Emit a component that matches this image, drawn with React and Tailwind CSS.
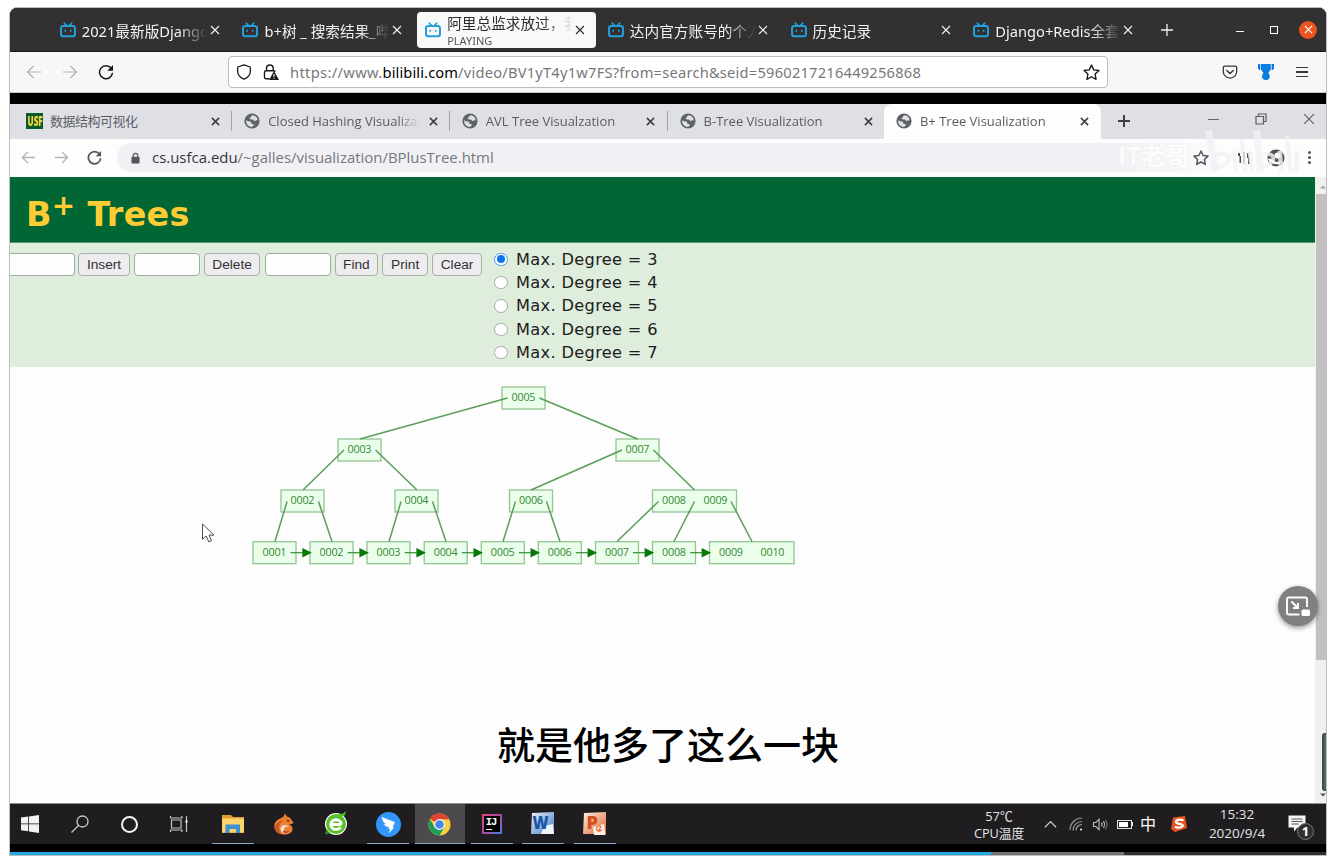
import React from "react";

const Bili = () => (
  <svg viewBox="0 0 16 16" className="h-4 w-4 shrink-0" fill="none" stroke="#23a0dc">
    <rect x="1" y="4.1" width="14" height="10.2" rx="2.4" strokeWidth="2" />
    <path d="M4.4 1.2 6.6 3.6M11.6 1.2 9.4 3.6" strokeWidth="1.7" strokeLinecap="round" />
    <path d="M5.3 7.8v2M10.7 7.8v2" strokeWidth="1.5" />
  </svg>
);

const Cross = ({ className, width = 1.2 }) => (
  <svg viewBox="0 0 10 10" className={className} fill="none" stroke="currentColor" strokeWidth={width}>
    <path d="M1 1l8 8M9 1l-8 8" />
  </svg>
);

const Globe = () => (
  <svg viewBox="0 0 16 16" className="h-4 w-4 shrink-0">
    <circle cx="8" cy="8" r="7.6" fill="#5f6368" />
    <path d="M2.2 7.2c1.6.9 2.6 1.3 3.9 1.2 1 0 1.2.9 1 1.7-.2.7.8.9 1.7.8 1.200-.1 1.300 1.100.5 1.900-.6.6-1 1.200-2 1.200A6.100 6.100 0 0 1 2.200 7.200zM8.700 2.300c-.9.6-1.900.8-1.800 1.700.1.8-1.500.9-1.300 1.800.3 1 2 .4 3.100.7.9.3.9 1.400 2 1.500.9.1 1.100-.8 3-.7a5.900 5.900 0 0 0-5-5z" fill="#dfe0e6" />
  </svg>
);

const Arrow = ({ className, flip, stroke = 1.2 }) => (
  <svg viewBox="0 0 16 16" className={className} fill="none" stroke="currentColor" strokeWidth={stroke}>
    {flip ? <path d="M1 8h13.500M8.500 2l6 6-6 6" /> : <path d="M15 8H1.500M7.500 2l-6 6 6 6" />}
  </svg>
);

const Reload = ({ className, stroke = 1.5 }) => (
  <svg viewBox="0 0 16 16" className={className} fill="none" stroke="currentColor" strokeWidth={stroke}>
    <path d="M13.200 4.300A6.500 6.500 0 1 0 14.500 8.800" />
    <path d="M15 1v5.700H9.300z" fill="currentColor" stroke="none" />
  </svg>
);

const Star = ({ className, stroke }) => (
  <svg viewBox="0 0 16 16" className={className} fill="none" stroke="currentColor" strokeWidth={stroke} strokeLinejoin="round">
    <path d="M8 1l2.100 4.500 4.900.6-3.600 3.400.9 4.900L8 12l-4.300 2.400.9-4.900L1 6.100l4.900-.6z" />
  </svg>
);

const firefoxTabs = [
  { title: "2021最新版Django全" },
  { title: "b+树 _ 搜索结果_哔" },
  { title: "阿里总监求放过，我", active: true },
  { title: "达内官方账号的个人" },
  { title: "历史记录" },
  { title: "Django+Redis全套视" },
];

function FirefoxTab({ title, active }) {
  return (
    <div className="flex w-[182.700px] shrink-0 items-center pr-[3.700px]">
      <div className={active ? "flex h-9 w-full items-center rounded bg-[#f9f9fa] pl-2 text-[#2c2c30]" : "flex h-9 w-full items-center pl-2 text-[#f2f2f2]"}>
        <Bili />
        <div className="ml-[6px] w-[127px] overflow-hidden whitespace-nowrap [mask-image:linear-gradient(to_right,black_96px,transparent_126px)]">
          {active ? (
            <>
              <div className="text-[14.670px] leading-[21px]">{title}</div>
              <div className="text-[11px] leading-[13px] text-[#55555a]">PLAYING</div>
            </>
          ) : (
            <div className="pt-[3px] text-[14.670px] leading-[22px]">{title}</div>
          )}
        </div>
        <Cross className="ml-[1px] h-[10px] w-[10px] shrink-0" width={1.1} />
      </div>
    </div>
  );
}

function FirefoxBars() {
  return (
    <div className="shrink-0 font-['Noto_Sans','Noto_Sans_CJK_SC',sans-serif]">
      <div className="flex h-11 items-center rounded-t-[7px] border-b border-[#1c1b1b] bg-[#323030] pl-[41.800px] text-[#f2f2f2]">
        {firefoxTabs.map((t) => <FirefoxTab key={t.title} {...t} />)}
        <svg viewBox="0 0 12 12" className="ml-[13.200px] h-3 w-3" stroke="currentColor" strokeWidth="1.300"><path d="M6 0v12M0 6h12" /></svg>
        <div className="ml-[63px] mt-1 h-px w-2 bg-white" />
        <div className="ml-[26px] h-2 w-2 border border-white" />
        <div className="ml-[21px] flex h-[18px] w-[18px] items-center justify-center rounded-full bg-[#e95420]">
          <Cross className="h-[9px] w-[9px] text-white" width={1.300} />
        </div>
      </div>
      <div className="flex h-[41px] items-center border-b border-[#c9c9c9] bg-[#f7f7f8] text-[#18181a]">
        <Arrow className="ml-4 h-4 w-4 text-[#b2b2b4]" />
        <Arrow flip className="ml-5 h-4 w-4 text-[#b2b2b4]" />
        <Reload className="ml-5 h-4 w-4" />
        <div className="ml-[114px] flex h-8 w-[880px] items-center rounded border border-[#bdbdbd] bg-white pl-[7px] pr-[7px]">
          <svg viewBox="0 0 16 16" className="h-4 w-4" fill="none" stroke="currentColor" strokeWidth="1.300"><path d="M8 .9 14.300 3v4.500c0 3.500-2.500 6-6.300 7.700-3.800-1.700-6.300-4.200-6.300-7.700V3z" strokeLinejoin="round" /></svg>
          <svg viewBox="0 0 16 16" className="ml-[11px] h-4 w-4"><path d="M6.500 14.700H3.200a1.700 1.700 0 0 1-1.700-1.700V8.300c0-.9.700-1.600 1.700-1.600h7.500c.8 0 1.300.4 1.500 1M3.500 6.500V4.300a3.300 3.300 0 0 1 6.700 0v2.200" fill="none" stroke="currentColor" strokeWidth="1.400" /><path d="M11 7l5 9H6.100z" fill="currentColor" /><path d="M11 10v3M11 13.800v1" stroke="white" strokeWidth="1.100" /></svg>
          <div className="ml-[11px] whitespace-nowrap text-[14.670px] leading-none text-[#77777b]">
            <span className="tracking-[0.350px]">https://www.</span><span className="tracking-[0.100px] text-black">bilibili.com</span><span className="tracking-[0.225px]">/video/BV1yT4y1w7FS?from=search&amp;seid=5960217216449256868</span>
          </div>
          <Star className="ml-auto h-[17px] w-[17px]" stroke={1.300} />
        </div>
        <svg viewBox="0 0 16 16" className="ml-[114px] h-4 w-4" fill="none" stroke="#38383d" strokeWidth="1.300"><path d="M2.700 2.200h10.600c.8 0 1.400.5 1.400 1.400v3.800c0 3.700-2.900 6.700-6.700 6.700S1.300 11.100 1.300 7.400V3.600c0-.9.6-1.400 1.400-1.400z" /><path d="M4.800 6.500 8 9.500l3.200-3" strokeWidth="1.500" strokeLinecap="round" /></svg>
        <svg viewBox="0 0 16 16" className="ml-5 h-4 w-4" fill="#0a7be0"><path d="M0 0h2.200v6H1.300L0 4.800zM2.900 0h9.900v6.300h-1.300v1.500l-1.300 1v1.300H5.500V8.800L4.200 7.800V6.300H2.900zM13.600 0H16v4.800L14.600 6h-1z" /><circle cx="7.900" cy="12.200" r="3.800" /></svg>
        <div className="ml-[22px] flex w-3 flex-col gap-[3px]"><i className="h-[1.500px] bg-[#38383d]" /><i className="h-[1.500px] bg-[#38383d]" /><i className="h-[1.500px] bg-[#38383d]" /></div>
      </div>
    </div>
  );
}

function ChromeTab({ title, usf, active, last }) {
  return (
    <div className={active ? "ml-[-1.600px] flex h-full w-[217px] shrink-0 items-center rounded-t-lg bg-[#fdfdfe] pl-[12px]" : "flex h-full w-[217.700px] shrink-0 items-center pl-[11.700px]"}>
      {usf ? (
        <div className="flex h-4 w-[17px] shrink-0 items-center justify-center bg-[#0c5a2b] text-[14px] font-extrabold leading-none text-[#f2d43c]"><span className="inline-block scale-x-[0.580]">USF</span></div>
      ) : <Globe />}
      <div className={usf ? "ml-[6.500px] w-[152.500px] shrink-0 overflow-hidden whitespace-nowrap text-[13px] leading-5 tracking-[-0.500px] text-[#5a5c62]" : "ml-2 w-[152px] shrink-0 overflow-hidden whitespace-nowrap text-[13px] leading-5 text-[#5a5c62] [mask-image:linear-gradient(to_right,black_130px,transparent_152px)]"}>
        {title}
      </div>
      <Cross className={active ? "ml-[7.700px] h-[9px] w-[9px] shrink-0 text-[#3f4046]" : "ml-[8.400px] h-[9px] w-[9px] shrink-0 text-[#3f4046]"} width={1.800} />
      {!active && !last && <div className="ml-[11.600px] h-5 w-px shrink-0 bg-[#a4a5aa]" />}
    </div>
  );
}

function ChromeBars() {
  return (
    <div className="shrink-0 bg-[#fdfdfe] font-['Open_Sans','Noto_Sans_CJK_SC',sans-serif]">
      <div className="flex h-[34.500px] items-center bg-[#dfe0e6] pl-[4.800px] text-[#3f4046]">
        <ChromeTab usf title="数据结构可视化" />
        <ChromeTab title="Closed Hashing Visualizat" />
        <ChromeTab title="AVL Tree Visualzation" />
        <ChromeTab title="B-Tree Visualization" last />
        <ChromeTab title="B+ Tree Visualization" active />
        <svg viewBox="0 0 12 12" className="ml-[17px] h-3 w-3" stroke="currentColor" strokeWidth="2"><path d="M6 0v12M0 6h12" /></svg>
        <div className="mb-1 ml-[78px] h-px w-[11px] bg-[#66676c]" />
        <svg viewBox="0 0 12 12" className="mb-1 ml-[36px] h-3 w-3" fill="none" stroke="#5c5d62" strokeWidth="1.200"><path d="M1 3.500h7.500V11H1zM3.500 3.500V1H11v7.500H8.500" /></svg>
        <Cross className="mb-1 ml-[36px] h-3 w-3 text-[#5c5d62]" width={0.900} />
      </div>
      <div className="flex h-[38.500px] items-center text-[#55565b]">
        <Arrow className="ml-[11px] h-[15px] w-[15px] text-[#b4b4b8]" stroke={1.500} />
        <Arrow flip className="ml-[18px] h-[15px] w-[15px] text-[#b4b4b8]" stroke={1.500} />
        <Reload className="ml-[18px] h-[15px] w-[15px]" stroke={1.900} />
        <div className="ml-[15px] flex h-[29px] w-[1106px] items-center rounded-full bg-gradient-to-r from-[#f1f0f4] from-90% to-[#fbfbfd] pl-[14px]">
          <svg viewBox="0 0 10 12" className="h-3 w-[9px]"><rect y="4.500" x=".5" width="9" height="7.500" rx="1" fill="#55565b" /><path d="M2.500 5V3.300a2.500 2.500 0 0 1 5 0V5" fill="none" stroke="#55565b" strokeWidth="1.300" /></svg>
          <div className="ml-[12px] whitespace-nowrap text-[14.950px] leading-none text-[#77787d]"><span className="text-[#35363b]">cs.usfca.edu</span>/~galles/visualization/BPlusTree.html</div>
          <div className="relative ml-auto mr-[14px]">
            <Star className="relative z-10 h-4 w-4 text-[#55565b]" stroke={1.500} />
            <Watermark />
          </div>
        </div>
        <svg viewBox="0 0 14 14" className="ml-[14px] h-[14px] w-[14px]" fill="#4b4c51"><path d="M1 2h2v3h1v7H2.500V5H1zM6 1h2v11l-2 1zM10 2h2v4h1v7h-2V7h-1z" /></svg>
        <svg viewBox="0 0 18 18" className="ml-[16px] h-[18px] w-[18px]"><circle cx="9" cy="9" r="8.500" fill="#4e4f54" /><circle cx="10.500" cy="6.500" r="3" fill="#fff" /><path d="M1 10c3-1.500 5 1.500 7 2.500s5 0 6.500-1c-1 3.500-4 4.500-7 3.500S2 13.500 1 10z" fill="#fff" /></svg>
        <div className="ml-[23px] flex flex-col gap-[2px]"><i className="h-[3px] w-[3px] rounded-full bg-[#55565b]" /><i className="h-[3px] w-[3px] rounded-full bg-[#55565b]" /><i className="h-[3px] w-[3px] rounded-full bg-[#55565b]" /></div>
      </div>
    </div>
  );
}

function Watermark() {
  return (
    <div className="pointer-events-none absolute left-[-75px] top-[-21px] flex w-[200px] items-end text-white">
      <span className="whitespace-nowrap text-[25px] font-bold leading-[36px] opacity-80 [text-shadow:0_0_1px_#d8d8dc]">IT老哥</span>
      <svg viewBox="0 0 100 44" className="ml-[11px] h-[44px] w-[100px] shrink-0 opacity-80" fill="none" stroke="#f2f2f5" strokeLinecap="square">
        <g strokeWidth="7"><path d="M7 5l6 34M55 5l3 34" /></g>
        <path d="M14 26c8-3 15 0 13 5-2 4-7 7-14 8M59 26c7-3 14 0 12 5-2 4-7 7-12 8" strokeWidth="4" />
        <g strokeWidth="4.500"><path d="M32 24l2 16M40 12l3 28M48 24l2 16M78 24l1 16M85 9l3 31M95 24l-1 16" /></g>
      </svg>
    </div>
  );
}

const Btn = ({ children, className }) => (
  <div className={className}>{children}</div>
);

const Field = ({ className }) => <div className={className} />;

const nodes = [
  [502, 387, 43, ["0005"]],
  [338, 439, 43, ["0003"]],
  [616, 439, 43, ["0007"]],
  [281, 490, 43, ["0002"]],
  [395, 490, 43, ["0004"]],
  [509.500, 490, 43, ["0006"]],
  [652.500, 490, 84, ["0008", "0009"]],
  [253, 541.700, 43, ["0001"]],
  [310, 541.700, 43, ["0002"]],
  [367, 541.700, 43, ["0003"]],
  [424.200, 541.700, 43, ["0004"]],
  [481.300, 541.700, 43, ["0005"]],
  [538.300, 541.700, 43, ["0006"]],
  [595.500, 541.700, 43, ["0007"]],
  [652.500, 541.700, 43, ["0008"]],
  [709.500, 541.700, 84.500, ["0009", "0010"]],
];

const edges = [
  [507.500, 398, 360, 439], [539.500, 398, 637.500, 439],
  [344, 450, 303, 490], [375.500, 450, 417, 490],
  [622, 450, 531, 490], [653.500, 450, 694.500, 490],
  [287, 501.500, 275, 541.500], [318.500, 501.500, 332, 541.500],
  [401, 501.500, 389, 541.500], [432.500, 501.500, 446, 541.500],
  [515.500, 501.500, 503, 541.500], [546.500, 501.500, 560, 541.500],
  [658.500, 501.500, 617, 541.500], [694.500, 501.500, 674, 541.500], [731, 501.500, 752, 541.500],
];

function Tree() {
  return (
    <svg viewBox="10 367 1305 436" className="block h-[436px] w-[1305px]">
      {nodes.map(([x, y, w, keys], i) => (
        <g key={i}>
          <rect x={x} y={y} width={w} height="22" fill="#ebfeeb" stroke="#93c593" strokeWidth="1.300" />
          {keys.map((k, j) => (
            <text key={j} x={x + 21.500 + j * 41.500} y={y + 14} textAnchor="middle" textLength="24" className="fill-[#338a33] font-['Open_Sans',sans-serif] text-[10.800px]">{k}</text>
          ))}
        </g>
      ))}
      {edges.map(([a, b, c, d], i) => <line key={i} x1={a} y1={b} x2={c} y2={d} stroke="#5a9e5a" strokeWidth="1.500" />)}
      {[0, 1, 2, 3, 4, 5, 6, 7].map((i) => (
        <g key={i}>
          <path d={`M${290.600 + i * 57.050} 552.700h12`} stroke="#2f8f2f" strokeWidth="1.200" />
          <path d={`M${302.300 + i * 57.050} 548v9.400l9.500-4.700z`} fill="#067806" />
        </g>
      ))}
      <path d="M202.500 524v15.300l3.700-3.200 2.600 5.700 2.700-1.200-2.500-5.500h5z" fill="#fff" stroke="#54484c" strokeWidth="1" />
    </svg>
  );
}

const degrees = [3, 4, 5, 6, 7];

function Page() {
  return (
    <div className="flex h-[627px] shrink-0 border-b border-[#8f8f8f]">
      <div className="flex w-[1305px] shrink-0 flex-col">
        <div className="h-[66px] border-b border-[#4b9b71] bg-[#006633] pl-[16px] pt-[15px] font-['DejaVu_Sans',sans-serif] text-[33.400px] font-bold leading-[46px] tracking-[0.300px] text-[#ffcc33]">
          B<span className="relative top-[-11px] text-[28px] leading-none">+</span> Trees
        </div>
        <div className="flex h-[124px] bg-[#deeddc] font-['Liberation_Sans',sans-serif] text-[13.700px] leading-none text-[#303034]">
          <div className="flex pt-[10px]">
            <Field className="h-[23px] w-[64.500px] rounded-r-sm border-y-[1.500px] border-r-[1.500px] border-[#a5a9a5] bg-[#fdfdfd]" />
            <Btn className="ml-[3.800px] flex h-[23px] w-[51.500px] items-center justify-center rounded-sm border-[1.500px] border-[#aaadab] bg-[#efecef]">Insert</Btn>
            <Field className="ml-1 h-[23px] w-[66px] rounded-sm border-[1.500px] border-[#a5a9a5] bg-[#fdfdfd]" />
            <Btn className="ml-1 flex h-[23px] w-[56.500px] items-center justify-center rounded-sm border-[1.500px] border-[#aaadab] bg-[#efecef]">Delete</Btn>
            <Field className="ml-[4.300px] h-[23px] w-[66px] rounded-sm border-[1.500px] border-[#a5a9a5] bg-[#fdfdfd]" />
            <Btn className="ml-[4px] flex h-[23px] w-[43.700px] items-center justify-center rounded-sm border-[1.500px] border-[#aaadab] bg-[#efecef]">Find</Btn>
            <Btn className="ml-[3.900px] flex h-[23px] w-[46px] items-center justify-center rounded-sm border-[1.500px] border-[#aaadab] bg-[#efecef]">Print</Btn>
            <Btn className="ml-[3.900px] flex h-[23px] w-[50px] items-center justify-center rounded-sm border-[1.500px] border-[#aaadab] bg-[#efecef]">Clear</Btn>
          </div>
          <div className="ml-[12px] pt-[5.300px] font-['DejaVu_Sans',sans-serif] text-[16.200px] text-[#1c201c]">
            {degrees.map((d) => (
              <div key={d} className="flex h-[23.300px] items-center">
                <span className={d === 3 ? "mb-[1px] flex h-[13.500px] w-[13.500px] items-center justify-center rounded-full border-[1.500px] border-[#4a95ee] bg-white" : "mb-[1px] h-[13.500px] w-[13.500px] rounded-full border-[1.300px] border-[#a9aaa9] bg-white"}>
                  {d === 3 && <i className="h-2 w-2 rounded-full bg-[#0a74f0]" />}
                </span>
                <span className="ml-[8.500px] whitespace-nowrap tracking-[0.330px]">Max. Degree = {d}</span>
              </div>
            ))}
          </div>
        </div>
        <div className="relative h-[436px] bg-[#fdfdfd]">
          <Tree />
          <div className="absolute left-[487px] top-[347.500px] whitespace-nowrap font-['Noto_Sans_CJK_SC',sans-serif] text-[38px] font-medium leading-[56px] text-black">就是他多了这么一块</div>
        </div>
      </div>
      <div className="relative flex w-[11px] flex-col items-end bg-[#f1f0f1]">
        <svg viewBox="0 0 8 4" className="mt-[8px] h-1 w-[6px]"><path d="M4 0l4 4H0z" fill="#a3a1a3" /></svg>
        <div className="mt-[5px] h-[466px] w-[10px] bg-[#c2c0c1]" />
        <div className="mt-[73px] h-[58px] w-[4px] rounded-l-[3px] border-y-2 border-l-2 border-[#45484c] bg-[#44706c]" />
        <svg viewBox="0 0 8 4" className="mt-[2px] h-1 w-[6px]"><path d="M0 0h8L4 4z" fill="#555" /></svg>
        <div className="absolute left-[-37px] top-[409px] flex h-10 w-10 items-center justify-center rounded-full bg-[#808080] shadow-[0_2px_5px_rgba(0,0,0,0.400)]">
          <svg viewBox="0 0 24 20" className="h-5 w-6" fill="none" stroke="#fff" strokeWidth="1.900"><path d="M13.500 18.500H2.500A1.500 1.500 0 0 1 1 17V3a1.500 1.500 0 0 1 1.500-1.500h17A1.500 1.500 0 0 1 21 3v8" /><path d="M5.500 5.500l6 6M12 7v5H7" /><rect x="15.500" y="13.500" width="8.500" height="6.500" rx="1.500" fill="#fff" stroke="none" /></svg>
        </div>
      </div>
    </div>
  );
}

const Explorer = () => (
  <svg viewBox="0 0 24 20" className="h-5 w-6"><path d="M1 1h9l2 2h11v16H1z" fill="#e0a02c" /><path d="M1 4.500h22V18.500H1z" fill="#fbd56b" /><path d="M4.500 19v-8.500h14.500V19h-4v-4H8.500v4z" fill="#3e8fd0" /></svg>
);
const Fox = () => (
  <svg viewBox="0 0 20 22" className="h-[22px] w-5"><path d="M11 .5l2 3c3 .5 4 2.500 6.500 6-1 1.700-3 1.700-5 1.200 3.500 1.500 5 4.500 3.500 7.500-2 3-6.500 4-10.500 3C2 20 0 16 .5 12 1 7 6 6 9.500 3.500z" fill="#ec8030" /><path d="M.5 13c2-1 3-5 9-6-4 3-5 7-4 11 .5 2 1.500 3 2.500 3.300C2.500 20.500.2 17 .5 13z" fill="#c95a22" /><path d="M7.500 18.500c-2-3-.5-6.500 4-6.500 2 0 3 1 3.500 2-2.500-1-5 0-5 2.300 0 2.200 3 2.700 5.500 1-1.200 3-6 4-8 1.200z" fill="#f4e2d8" /><path d="M10 16.500c0 2.200 3 2.500 5.500.8-1 2.500-4 3.500-6.500 1.700z" fill="#a8321f" /><path d="M13 6.500l3 1.500-2.500.7z" fill="#3a1c12" /></svg>
);
const GreenE = () => (
  <svg viewBox="0 0 26 26" className="mb-[2px] h-[26px] w-[26px]"><circle cx="13" cy="14" r="11" fill="#fff" /><circle cx="13" cy="14" r="10" fill="#5cc02b" /><path d="M18.500 14.500H8M18.300 14.500c0-3-2.500-4.700-5.300-4.700s-5.200 1.900-5.200 4.700c0 3.200 2.400 4.900 5.200 4.900 2 0 3.700-.7 4.700-2" fill="none" stroke="#fff" strokeWidth="2.900" /><path d="M15 4c4 .5 6-.5 8-3-.3 4-2 6-5.500 5.500z" fill="#55c41d" /><path d="M3 19c0 3-1 4-1 5 2 1 4 0 5-1z" fill="#2c8c11" /></svg>
);
const Ding = () => (
  <svg viewBox="0 0 26 26" className="h-[25px] w-[25px]"><circle cx="13" cy="13" r="13" fill="#3296fa" /><path d="M6 5c4 2.300 9 3.500 13.500 5.500-.5 2.500-1.500 4-2.500 5.500h2l-5.500 6 1.200-4.500h-2.200l1-1.800c-3-.2-4.500-1.500-5.500-3.200 1 .3 2 .4 3 .3C8 11.800 6.500 9 6 5z" fill="#fff" /></svg>
);
const ChromeLogo = () => (
  <svg viewBox="0 0 24 24" className="h-[23px] w-[23px]"><circle cx="12" cy="12" r="11.500" fill="#f8cf3e" /><path d="M12 12 2 6.300A11.500 11.500 0 0 1 22 6.500H12z" fill="#dc4437" /><path d="M2 6.300A11.500 11.500 0 0 0 12 23.500l5-8.700L12 12l-5 2.800z" fill="#1f9d59" /><circle cx="12" cy="12" r="5.700" fill="#fff" /><circle cx="12" cy="12" r="4.500" fill="#4a86ee" /></svg>
);
const Idea = () => (
  <div className="flex h-5 w-5 bg-gradient-to-br from-[#e8427a] via-[#a449a6] to-[#1780e8] p-[2px]">
    <div className="h-4 w-4 bg-black pl-[2px] pt-[1px] font-['Liberation_Mono',monospace] text-[10.500px] font-bold leading-[10px] tracking-[-1px] text-white">IJ<div className="mt-[1.500px] h-[1.500px] w-[6px] bg-white" /></div>
  </div>
);
const Word = () => (
  <svg viewBox="0 0 24 24" className="mb-[2px] mr-[2px] h-6 w-6"><defs><linearGradient id="wg" x2="1" y2="1"><stop stopColor="#eff5fc" /><stop offset="1" stopColor="#3d79c5" /></linearGradient></defs><path d="M2 2 24 1v22H1z" fill="url(#wg)" /><path d="M14 15l9-2 1 10H11z" fill="#eef4fc" /><text x="2.500" y="17.500" textLength="16" lengthAdjust="spacingAndGlyphs" className="fill-[#1757a5] font-['Open_Sans',sans-serif] text-[18px] font-extrabold">W</text></svg>
);
const Ppt = () => (
  <svg viewBox="0 0 24 24" className="mb-[2px] mr-[2px] h-6 w-6"><defs><linearGradient id="pg" x2="1" y2="1"><stop stopColor="#fdf1ea" /><stop offset="1" stopColor="#e0662c" /></linearGradient></defs><path d="M2 2 24 1v22H1z" fill="url(#pg)" /><path d="M11 16l11-3 1.500 11H12z" fill="#fcefe8" /><path d="M19 15.500a2.700 2.700 0 1 0 .5 3.500H17z" fill="none" stroke="#e07040" strokeWidth="1.200" /><text x="4.500" y="17.500" className="fill-[#d2511c] font-['Open_Sans',sans-serif] text-[18px] font-extrabold">P</text></svg>
);

const apps = [
  { icon: <Explorer />, run: true },
  { icon: <Fox /> },
  { icon: <GreenE /> },
  { icon: <Ding />, run: true },
  { icon: <ChromeLogo />, focus: true },
  { icon: <Idea />, run: true },
  { icon: <Word />, run: true },
  { icon: <Ppt />, run: true },
];

function Taskbar() {
  return (
    <div className="flex h-[40px] shrink-0 bg-[#1f1d20] font-['Open_Sans','Noto_Sans_CJK_SC',sans-serif] text-[#e4e4e4]">
      <div className="flex w-[45px] items-center justify-center pr-[5px]">
        <svg viewBox="0 0 18 18" className="h-[18px] w-[18px]" fill="#f2f2f2"><path d="M0 2.500l7.200-1v7H0zM8 1.400 18 0v8.500H8zM0 9.300h7.200v7l-7.200-1zM8 9.300h10V18L8 16.500z" /></svg>
      </div>
      <div className="flex w-[49.500px] items-center justify-center">
        <svg viewBox="0 0 18 18" className="h-[18px] w-[18px]" fill="none" stroke="#c9c9c9" strokeWidth="1.300"><circle cx="11.500" cy="6.500" r="5.500" /><path d="M7.500 10.500.5 17.500" /></svg>
      </div>
      <div className="flex w-[49.500px] items-center justify-center"><div className="ml-px h-[17px] w-[17px] rounded-full border-[2.500px] border-[#f4f4f4]" /></div>
      <div className="flex w-[49.500px] items-center justify-center">
        <svg viewBox="0 0 18 16" className="h-4 w-[18px]" fill="none" stroke="#c4c4c4" strokeWidth="1.200"><path d="M1.500 4h9.500v8H1.500zM.5 0v2H12V0M.5 16v-2H12v2M16.500 0v16" /><path d="M15.500 5.500h2" strokeWidth="2" stroke="#fff" /></svg>
      </div>
      <div className="ml-[3.300px] flex">
        {apps.map((a, i) => (
          <div key={i} className="flex w-[51.800px] justify-center">
            <div className={a.focus ? "flex h-full w-[50.500px] flex-col items-center bg-[#4c4a4c]" : "flex h-full w-[42px] flex-col items-center"}>
              <div className="flex flex-1 items-center justify-center pt-[2px]">{a.icon}</div>
              <div className={a.run || a.focus ? "h-[1.500px] w-full bg-[#8ea6cc]" : "h-[1.500px] w-full"} />
            </div>
          </div>
        ))}
      </div>
      <div className="ml-auto flex items-center text-[12.800px]">
        <div className="w-[50px] pt-[1px] text-center leading-[17px]"><div className="whitespace-nowrap">57℃</div><div className="whitespace-nowrap tracking-[-0.100px]">CPU温度</div></div>
        <div className="ml-[13px] flex w-[26px] justify-center"><svg viewBox="0 0 14 8" className="h-2 w-[13px]" fill="none" stroke="#d0d0d0" strokeWidth="1.300"><path d="M1 7.500l6-6 6 6" /></svg></div>
        <div className="flex w-[25px] justify-center"><svg viewBox="0 0 14 14" className="h-[14px] w-[14px]" fill="none" stroke="#9a9a9a" strokeWidth="1.200"><path d="M1 13A12 12 0 0 1 13 1M4 13.500A9 9 0 0 1 13 4.500M7 13.500a6 6 0 0 1 6-6" /><circle cx="12" cy="12.500" r="1" fill="#fff" stroke="none" /></svg></div>
        <div className="flex w-[23px] justify-center"><svg viewBox="0 0 16 14" className="h-[13px] w-4" fill="none" stroke="#bdbdbd" strokeWidth="1.200"><path d="M1 4.800h2.500L7 1.500v11L3.500 9.200H1zM9.500 5a3 3 0 0 1 0 4M11.500 3.500a5 5 0 0 1 0 7" /><path d="M13.500 2a7 7 0 0 1 0 10" stroke="#777" /></svg></div>
        <div className="flex w-[27px] items-center justify-center"><div className="h-[9px] w-[15px] border border-[#e4e4e4] p-[1px]"><div className="h-full w-[9px] bg-white" /></div><div className="h-1 w-px bg-white" /></div>
        <div className="w-5 text-center text-[16px] leading-none text-white">中</div>
        <div className="ml-2 flex w-[26px] justify-center"><svg viewBox="0 0 16 16" className="h-4 w-4"><path d="M2 1.500 14 0l2 12L4 16 0 13z" fill="#e8531f" /><path d="M12.500 4.300C9 3 4.500 4 5 6.200s7 1 6.800 3.500c-.3 2-5 2.500-8 1" fill="none" stroke="#fff" strokeWidth="2.200" /></svg></div>
        <div className="ml-[10px] w-[70px] whitespace-nowrap text-center text-[13.500px] leading-[19px]">15:32<br />2020/9/4</div>
        <div className="relative ml-3 mr-3 h-[30px] w-[30px]">
          <svg viewBox="0 0 30 30" className="h-[30px] w-[30px]"><path d="M4.500 6.500h17v12h-8l-3.500 4v-4H4.500z" fill="#f5f5f5" /><path d="M7.500 10h11M7.500 12.500h11M7.500 15h7" stroke="#555" strokeWidth="1" /></svg>
          <div className="absolute left-[13px] top-[14px] flex h-[17px] w-[17px] items-center justify-center rounded-full border border-[#77777a] bg-[#303033] text-[13px] font-bold leading-none text-white">1</div>
        </div>
      </div>
    </div>
  );
}

export default function App() {
  return (
    <div className="flex h-[865px] w-[1336px] overflow-hidden bg-white pl-[9px] pt-[7px]">
      <div className="flex h-[849px] w-[1318px] flex-col overflow-hidden rounded-t-lg border border-[#bcbcbc] bg-black">
        <FirefoxBars />
        <div className="h-[11px] shrink-0 bg-black" />
        <ChromeBars />
        <Page />
        <Taskbar />
        <div className="h-2 shrink-0 bg-black" />
        <div className="flex h-[3px] shrink-0 bg-[#303030]">
          <div className="w-[981px] bg-[#23a9e6]" />
          <div className="w-[133px] bg-[#747272]" />
        </div>
      </div>
    </div>
  );
}
